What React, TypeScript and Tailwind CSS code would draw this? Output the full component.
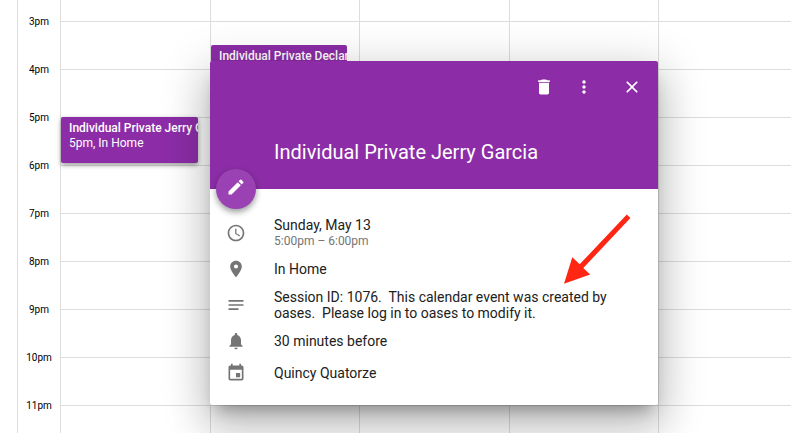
import React from "react";
import type { IconType } from "react-icons";
import {
  MdAccessTime,
  MdClose,
  MdDelete,
  MdEdit,
  MdEvent,
  MdMoreVert,
  MdNotes,
  MdNotifications,
  MdPlace,
} from "react-icons/md";

const hours = ["3pm", "4pm", "5pm", "6pm", "7pm", "8pm", "9pm", "10pm", "11pm"];

interface DayColumnProps {
  children?: React.ReactNode;
}

const DayColumn = ({ children }: DayColumnProps) => (
  <div className="relative flex flex-col border-l border-[#dddddd]">
    <div className="h-[22px] border-b border-[#dddddd]" />
    {hours.slice(1).map((hour) => (
      <div key={hour} className="h-12 border-b border-[#dddddd]" />
    ))}
    {children}
  </div>
);

interface DetailRowProps {
  icon: IconType;
  children: React.ReactNode;
}

const DetailRow = ({ icon: Icon, children }: DetailRowProps) => (
  <li className="flex items-center gap-7">
    <Icon className="size-5 shrink-0 text-[#757575]" />
    {children}
  </li>
);

const EventDialog = () => (
  <div
    role="dialog"
    aria-labelledby="event-title"
    className="absolute left-[210px] top-[61px] w-[448px] rounded-xs bg-white text-sm leading-4 text-[#212121] shadow-[0_24px_38px_3px_rgba(0,0,0,0.14),0_9px_46px_8px_rgba(0,0,0,0.14),0_11px_15px_-7px_rgba(0,0,0,0.3)]"
  >
    <header className="relative flex h-32 flex-col justify-between rounded-t-xs bg-[#8c2da7] px-4 pb-[25px] pt-4 text-white">
      <div className="flex justify-end">
        <button type="button" aria-label="Delete event" className="mr-5">
          <MdDelete className="size-5" />
        </button>
        <button type="button" aria-label="More actions" className="mr-7">
          <MdMoreVert className="size-5" />
        </button>
        <button type="button" aria-label="Close">
          <MdClose className="size-5" />
        </button>
      </div>
      <h2 id="event-title" className="pl-12 text-xl leading-6">
        Individual Private Jerry Garcia
      </h2>
      <button
        type="button"
        aria-label="Edit event"
        className="absolute -bottom-5 left-1.5 flex size-10 items-center justify-center rounded-full bg-[#9a42b3] pb-1 shadow-[0_3px_6px_rgba(0,0,0,0.4)]"
      >
        <MdEdit className="size-5" />
      </button>
    </header>

    <ul className="px-4 pb-4 pt-6">
      <DetailRow icon={MdAccessTime}>
        <div className="py-1">
          <p>Sunday, May 13</p>
          <p className="text-xs leading-4 text-[#757575]">5:00pm – 6:00pm</p>
        </div>
      </DetailRow>
      <DetailRow icon={MdPlace}>
        <p className="py-2">In Home</p>
      </DetailRow>
      <DetailRow icon={MdNotes}>
        <p className="whitespace-pre-line py-1">
          Session ID: 1076.&nbsp; This calendar event was created by{"\n"}
          oases.&nbsp; Please log in to oases to modify it.
        </p>
      </DetailRow>
      <DetailRow icon={MdNotifications}>
        <p className="py-2">30 minutes before</p>
      </DetailRow>
      <DetailRow icon={MdEvent}>
        <p className="py-2">Quincy Quatorze</p>
      </DetailRow>
    </ul>

    <svg
      className="absolute right-6 top-[152px] h-[72px] w-[72px]"
      viewBox="562 213 72 72"
      fill="#ff2614"
      aria-hidden="true"
    >
      <path d="M564 283.7 L572.3 257.3 L579.7 264.3 L626.8 214.5 L630.4 218 L583.3 268 L590.2 274.4 Z" />
    </svg>
  </div>
);

const App = () => {
  return (
    <main className="relative flex min-h-screen overflow-hidden bg-white font-[Roboto,sans-serif]">
      <div className="ml-[17px] w-[43px] shrink-0 border-l border-[#dddddd]">
        <div className="-mt-0.5">
          {hours.map((hour) => (
            <div
              key={hour}
              className="flex h-12 items-center justify-center text-[10px] leading-4 text-black"
            >
              {hour}
            </div>
          ))}
        </div>
      </div>

      <div className="grid flex-1 grid-cols-[150px_149px_150px_149px_1fr]">
        <DayColumn>
          <div className="absolute left-0 top-[117px] h-[46px] w-[137px] overflow-hidden whitespace-nowrap rounded-xs bg-[#8c2da7] pl-2 pt-1 text-xs leading-[15px] text-white shadow-[0_2px_5px_rgba(0,0,0,0.4)]">
            <p className="font-medium">Individual Private Jerry Garcia</p>
            <p>5pm, In Home</p>
          </div>
        </DayColumn>
        <DayColumn>
          <div className="absolute left-0 top-[45px] h-[46px] w-[136px] overflow-hidden whitespace-nowrap rounded-xs bg-[#8c2da7] pl-2 pt-1 text-xs leading-[15px] text-white">
            <p className="font-medium">Individual Private Declan</p>
          </div>
        </DayColumn>
        <DayColumn />
        <DayColumn />
        <DayColumn />
      </div>

      <EventDialog />
    </main>
  );
};

export default App;
